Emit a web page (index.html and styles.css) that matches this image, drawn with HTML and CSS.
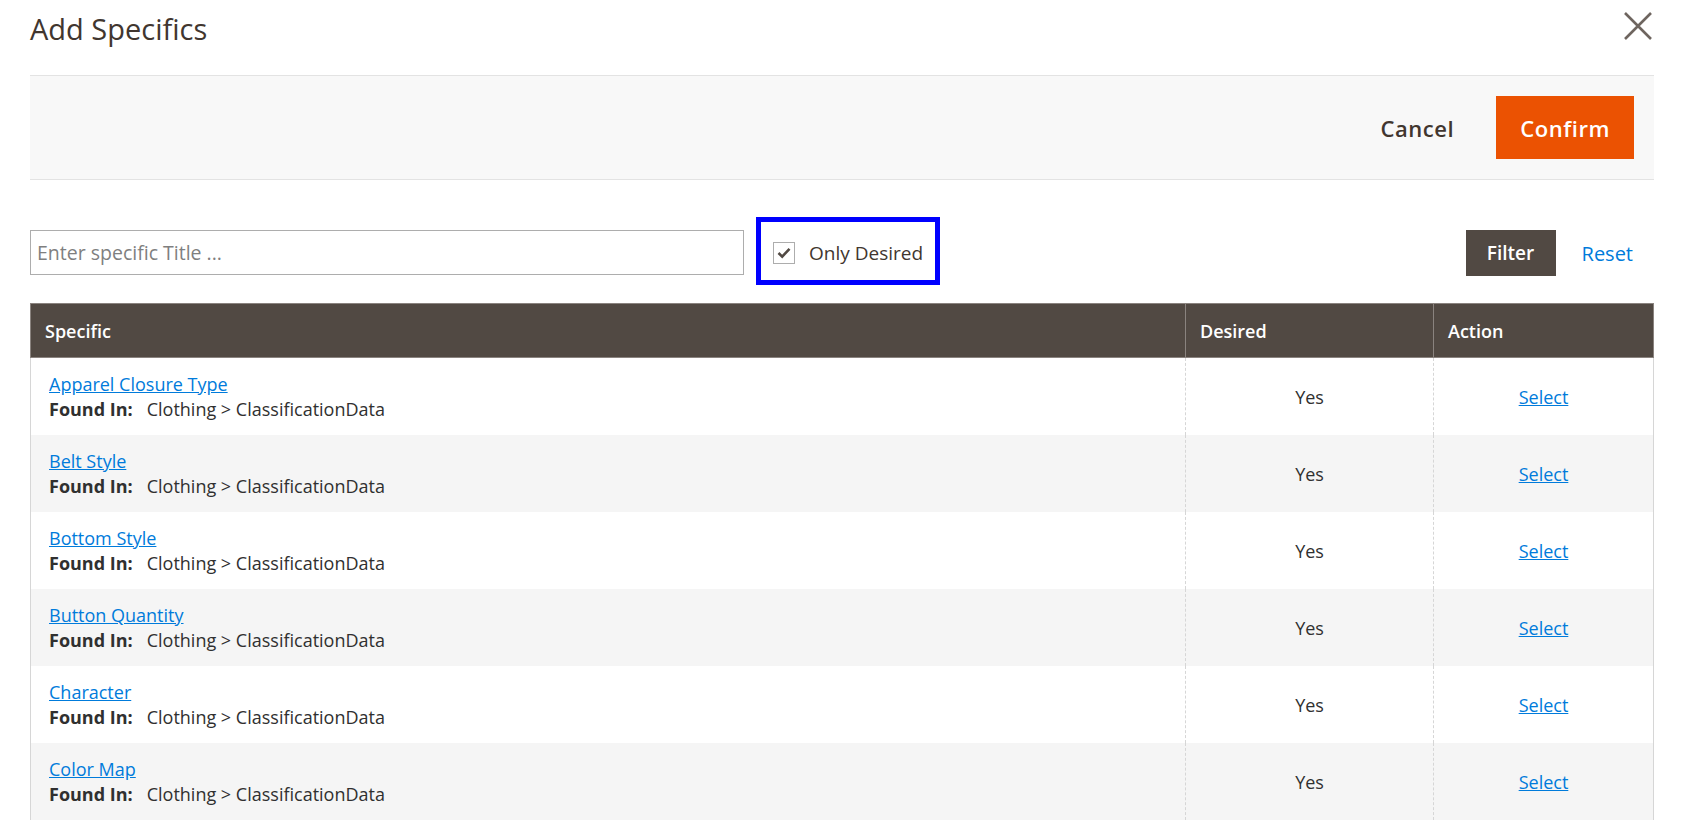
FILE: index.html
```html
<!DOCTYPE html>
<html lang="en">

<head>
    <meta charset="UTF-8">
    <meta name="viewport" content="width=device-width, initial-scale=1.0">
    <title>Add Specifics</title>
    <link rel="stylesheet" href="styles.css">
</head>

<body>
    <div class="modal">
        <header class="modal-header">
            <h1 class="modal-title">Add Specifics</h1>
            <button class="modal-close" type="button" aria-label="Close">
                <svg width="30" height="30" viewBox="0 0 30 30">
                    <path d="M2 2 L28 28 M28 2 L2 28" stroke="#6e655f" stroke-width="2.6" fill="none" />
                </svg>
            </button>
        </header>

        <div class="page-actions">
            <button class="btn-cancel" type="button">Cancel</button>
            <button class="btn-primary" type="button">Confirm</button>
        </div>

        <div class="filter-row">
            <input class="title-input" type="text" placeholder="Enter specific Title ...">
            <label class="only-desired">
                <span class="check">
                    <svg width="14" height="12" viewBox="0 0 14 12">
                        <path d="M1.5 6 L5.2 9.6 L12.5 1.8" stroke="#514943" stroke-width="2.6" fill="none" />
                    </svg>
                </span>
                Only Desired
            </label>
            <div class="filter-actions">
                <button class="btn-filter" type="button">Filter</button>
                <a class="reset" href="#">Reset</a>
            </div>
        </div>

        <table class="data-grid">
            <thead>
                <tr>
                    <th>Specific</th>
                    <th class="col-desired">Desired</th>
                    <th class="col-action">Action</th>
                </tr>
            </thead>
            <tbody>
                <tr>
                    <td><a href="#">Apparel Closure Type</a><br><strong>Found In:</strong><span class="path">Clothing &gt; ClassificationData</span></td>
                    <td class="center">Yes</td>
                    <td class="center"><a href="#">Select</a></td>
                </tr>
                <tr>
                    <td><a href="#">Belt Style</a><br><strong>Found In:</strong><span class="path">Clothing &gt; ClassificationData</span></td>
                    <td class="center">Yes</td>
                    <td class="center"><a href="#">Select</a></td>
                </tr>
                <tr>
                    <td><a href="#">Bottom Style</a><br><strong>Found In:</strong><span class="path">Clothing &gt; ClassificationData</span></td>
                    <td class="center">Yes</td>
                    <td class="center"><a href="#">Select</a></td>
                </tr>
                <tr>
                    <td><a href="#">Button Quantity</a><br><strong>Found In:</strong><span class="path">Clothing &gt; ClassificationData</span></td>
                    <td class="center">Yes</td>
                    <td class="center"><a href="#">Select</a></td>
                </tr>
                <tr>
                    <td><a href="#">Character</a><br><strong>Found In:</strong><span class="path">Clothing &gt; ClassificationData</span></td>
                    <td class="center">Yes</td>
                    <td class="center"><a href="#">Select</a></td>
                </tr>
                <tr>
                    <td><a href="#">Color Map</a><br><strong>Found In:</strong><span class="path">Clothing &gt; ClassificationData</span></td>
                    <td class="center">Yes</td>
                    <td class="center"><a href="#">Select</a></td>
                </tr>
            </tbody>
        </table>
    </div>
</body>

</html>
```

FILE: styles.css
```css
/* Page base */
body {
    margin: 0;
    padding: 0;
    background: #fff;
    font-family: 'Open Sans', 'Liberation Sans', sans-serif;
    color: #303030;
    overflow: hidden;
}

.modal {
    padding: 0 28px 0 30px;
}

/* Title + close */
.modal-header {
    display: flex;
    justify-content: space-between;
    align-items: flex-start;
    height: 75px;
}

.modal-title {
    margin: 0;
    font-size: 29px;
    font-weight: 400;
    line-height: 58px;
    color: #41362f;
}

.modal-close {
    border: 0;
    background: none;
    padding: 0;
    margin-top: 11px;
    margin-right: 1px;
    cursor: pointer;
}

.modal-close svg {
    display: block;
}

/* Grey action bar */
.page-actions {
    display: flex;
    justify-content: flex-end;
    align-items: center;
    height: 103px;
    padding-right: 20px;
    background: #f8f8f8;
    border-top: 1px solid #e3e3e3;
    border-bottom: 1px solid #e3e3e3;
}

.btn-cancel {
    border: 0;
    background: none;
    padding: 0 20px;
    margin-right: 22px;
    font-family: inherit;
    font-size: 22px;
    font-weight: 600;
    letter-spacing: .025em;
    color: #41362f;
    cursor: pointer;
}

.btn-primary {
    border: 0;
    background: #eb5202;
    color: #fff;
    height: 63px;
    padding: 0 24px;
    font-family: inherit;
    font-size: 22px;
    font-weight: 600;
    letter-spacing: .025em;
    cursor: pointer;
}

/* Search / filter row */
.filter-row {
    display: flex;
    align-items: flex-start;
    margin-top: 37px;
}

.title-input {
    box-sizing: border-box;
    width: 714px;
    height: 45px;
    margin-top: 13px;
    padding: 0 6px;
    border: 1px solid #adadad;
    border-radius: 0;
    font-family: inherit;
    font-size: 19.5px;
    color: #303030;
}

.title-input::placeholder {
    color: #7f7f7f;
}

.only-desired {
    display: flex;
    align-items: center;
    box-sizing: border-box;
    height: 68px;
    margin-left: 12px;
    padding: 3px 12px 0;
    border: 5px solid #0000ff;
    font-size: 19px;
    color: #41362f;
    gap: 14px;
}

.check {
    box-sizing: border-box;
    width: 22px;
    height: 22px;
    border: 1px solid #adadad;
    display: flex;
    justify-content: center;
    align-items: center;
    background: #fff;
}

.filter-actions {
    display: flex;
    align-items: center;
    margin-left: auto;
    margin-top: 13px;
    padding-right: 21px;
}

.btn-filter {
    border: 0;
    background: #514943;
    color: #fff;
    width: 90px;
    height: 46px;
    font-family: inherit;
    font-size: 19px;
    font-weight: 600;
    cursor: pointer;
}

.reset {
    margin-left: 26px;
    font-size: 20px;
    color: #007bdb;
    text-decoration: none;
}

/* Grid */
.data-grid {
    width: 100%;
    margin-top: 18px;
    border-collapse: collapse;
    border-left: 1px solid #d6d6d6;
    border-right: 1px solid #d6d6d6;
    font-size: 18px;
}

.data-grid th {
    height: 54px;
    box-sizing: border-box;
    padding: 0 14px;
    background: #514943;
    color: #fff;
    font-weight: 600;
    text-align: left;
    border: 1px solid #8a837f;
}

.data-grid .col-desired {
    width: 248px;
}

.data-grid .col-action {
    width: 220px;
}

.data-grid td {
    padding: 14px 18px 13px;
    line-height: 25px;
    vertical-align: middle;
    border-left: 1px dashed #d6d6d6;
}

.data-grid tbody tr:nth-child(even) {
    background: #f5f5f5;
}

.data-grid td.center {
    text-align: center;
}

.data-grid a {
    color: #007bdb;
    text-decoration: underline;
}

.data-grid strong {
    font-weight: 700;
}

.path {
    margin-left: 14px;
}
```
